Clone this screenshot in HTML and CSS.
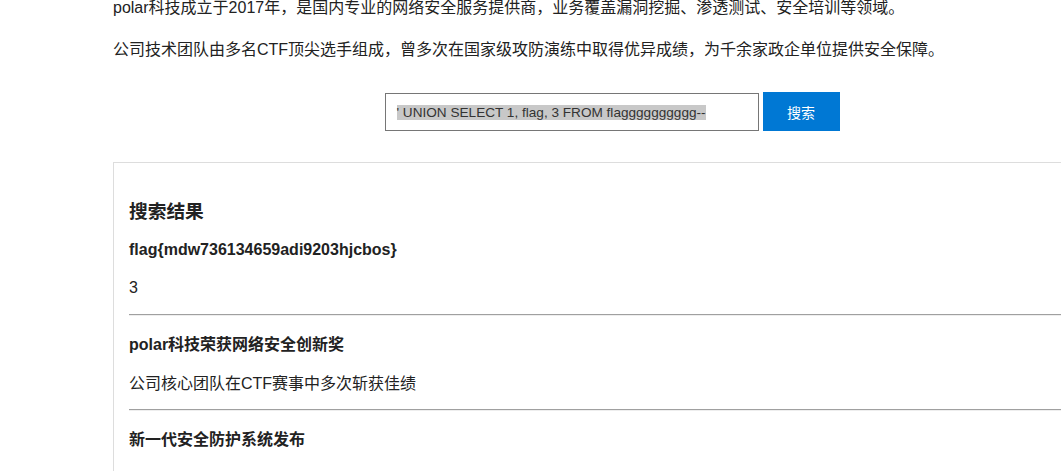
FILE: index.html
```html
<!DOCTYPE html>
<html lang="zh-CN">
<head>
    <meta charset="UTF-8">
    <meta name="viewport" content="width=device-width, initial-scale=1.0">
    <title>polar科技 - 新闻搜索</title>
    <link rel="stylesheet" href="styles.css">
</head>
<body>
    <div class="container">
        <div class="intro">
            <p>polar科技成立于2017年，是国内专业的网络安全服务提供商，业务覆盖漏洞挖掘、渗透测试、安全培训等领域。</p>
            <p>公司技术团队由多名CTF顶尖选手组成，曾多次在国家级攻防演练中取得优异成绩，为千余家政企单位提供安全保障。</p>
        </div>

        <form class="search-form" onsubmit="return false;">
            <div class="search-input" role="textbox"><span class="selected">' UNION SELECT 1, flag, 3 FROM flagggggggggg--</span></div>
            <button type="submit">搜索</button>
        </form>

        <div class="results">
            <h3>搜索结果</h3>
            <div class="result-item">
                <h4>flag{mdw736134659adi9203hjcbos}</h4>
                <p>3</p>
            </div>
            <hr>
            <div class="result-item">
                <h4>polar科技荣获网络安全创新奖</h4>
                <p>公司核心团队在CTF赛事中多次斩获佳绩</p>
            </div>
            <hr>
            <div class="result-item">
                <h4>新一代安全防护系统发布</h4>
            </div>
        </div>
    </div>
</body>
</html>
```

FILE: styles.css
```css
body {
    margin: 0;
    font-family: "Liberation Sans", Arial, "Noto Sans CJK SC", sans-serif;
    font-size: 16px;
    line-height: 1.6;
    color: #222;
    background-color: #fff;
    overflow: hidden;
}

.container {
    width: 998px;
    margin-left: 113px;
}

.intro {
    margin-top: -5px;
}

.intro p {
    margin: 0 0 16px;
}

.search-form {
    display: flex;
    justify-content: center;
    align-items: flex-end;
    gap: 4px;
    margin: 30px 0 31px;
}

.search-input {
    width: 374px;
    height: 38px;
    box-sizing: border-box;
    border: 1px solid #767676;
    padding: 0 11px;
    font-size: 13.6px;
    line-height: 37px;
    color: #333;
    white-space: nowrap;
    overflow: hidden;
    background-color: #fff;
}

.search-input .selected {
    background-color: #c8c8c8;
}

.search-form button {
    width: 77px;
    height: 39px;
    padding: 0;
    border: none;
    background-color: #0078d4;
    color: #fff;
    font-family: inherit;
    font-size: 14px;
    cursor: pointer;
}

.results {
    border: 1px solid #ddd;
    padding: 15px;
}

.results h3 {
    font-size: 18.72px;
    margin: 18.72px 0 10px;
}

.result-item h4 {
    font-size: 16px;
    margin: 0 0 13px;
}

.result-item p {
    margin: 0;
}

.results hr {
    height: 0;
    margin: 13px 0 16px;
    border: none;
    border-top: 1px solid #a0a0a0;
    border-bottom: 1px solid #eee;
}
```
